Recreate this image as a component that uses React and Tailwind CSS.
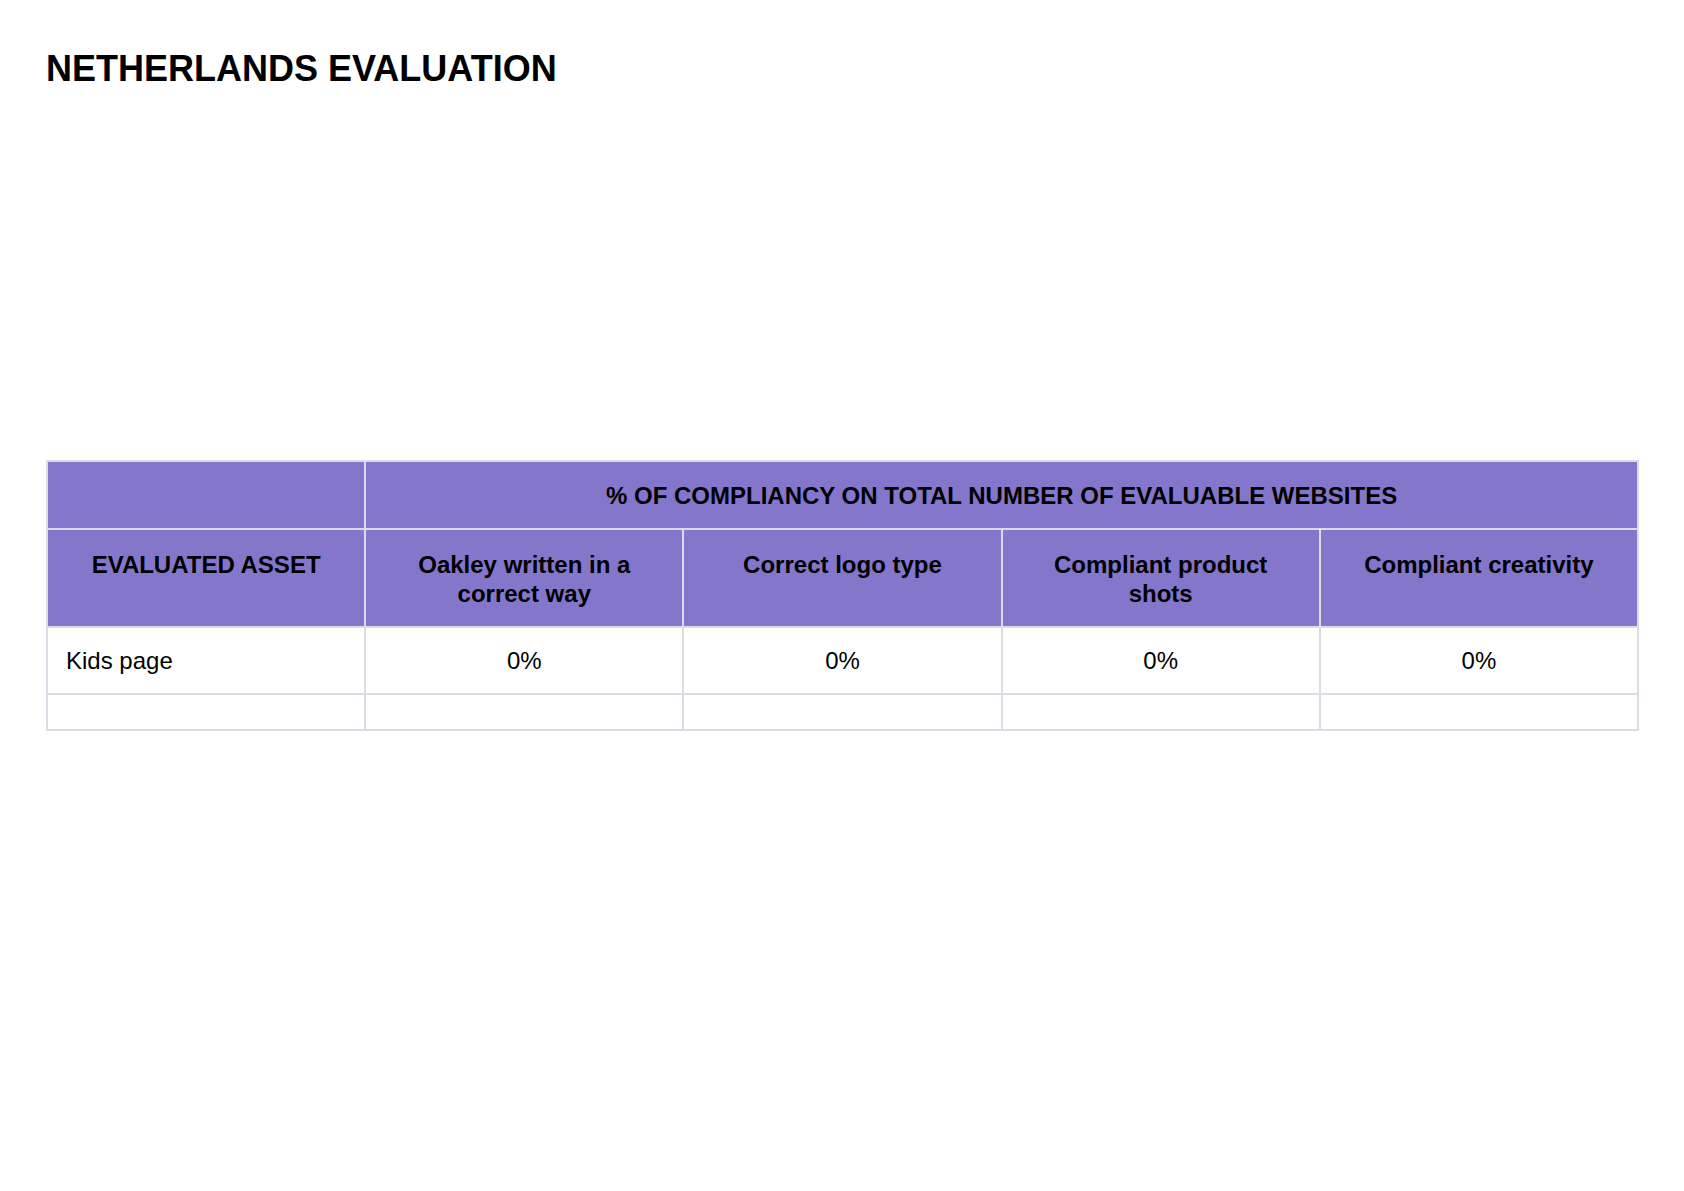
import React from "react";

const columns = [
  "Oakley written in a correct way",
  "Correct logo type",
  "Compliant product shots",
  "Compliant creativity",
];

const rows = [
  { asset: "Kids page", values: ["0%", "0%", "0%", "0%"], pad: "pt-[19px] pb-[18px]" },
  { asset: "", values: ["", "", "", ""], pad: "py-[17px]" },
];

export default function App() {
  const cell = "border-2 border-[#dddce6] px-[18px] leading-[1.2]";
  const head = `${cell} bg-[#8477cb] font-bold text-black`;

  return (
    <div
      className="min-h-[1191px] bg-white pl-[46px] pt-[47px] text-black"
      style={{ fontFamily: '"Liberation Sans", Arial, sans-serif' }}
    >
      <h1 className="text-[36px] font-bold leading-[1.2]">NETHERLANDS EVALUATION</h1>

      <table className="mt-[370px] w-[1593px] table-fixed border-collapse text-[24px]">
        <thead>
          <tr>
            <th className={`${head} pt-[20px] pb-[17px]`}></th>
            <th colSpan={4} className={`${head} pt-[20px] pb-[17px] text-center align-middle`}>
              % OF COMPLIANCY ON TOTAL NUMBER OF EVALUABLE WEBSITES
            </th>
          </tr>
          <tr>
            <th className={`${head} pt-[21px] pb-[17px] text-center align-top`}>EVALUATED ASSET</th>
            {columns.map((c) => (
              <th key={c} className={`${head} pt-[21px] pb-[17px] text-center align-top`}>
                {c}
              </th>
            ))}
          </tr>
        </thead>
        <tbody>
          {rows.map((r, i) => (
            <tr key={i}>
              <td className={`${cell} ${r.pad} text-left`}>{r.asset}</td>
              {r.values.map((v, j) => (
                <td key={j} className={`${cell} ${r.pad} text-center`}>
                  {v}
                </td>
              ))}
            </tr>
          ))}
        </tbody>
      </table>
    </div>
  );
}
